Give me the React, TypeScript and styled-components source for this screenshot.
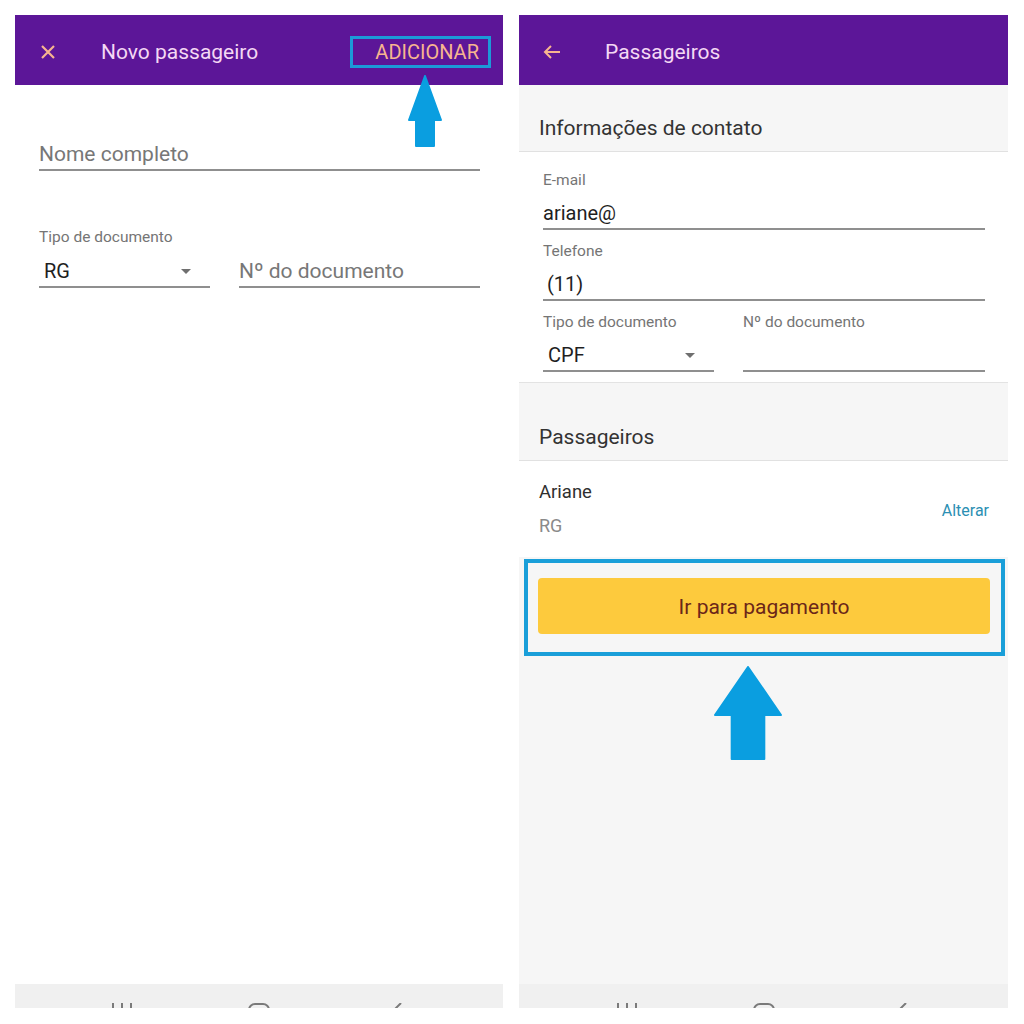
import styled, { createGlobalStyle } from "styled-components";

const GlobalStyle = createGlobalStyle`
  body {
    margin: 0;
    background: #ffffff;
    font-family: Roboto, "Noto Sans", Arial, sans-serif;
  }
`;

const Page = styled.div`
  display: flex;
  gap: 16px;
  padding: 15px 0 0 15px;
  height: 1024px;
  box-sizing: border-box;
`;

const Phone = styled.div<{ $bg: string; $w: number }>`
  position: relative;
  width: ${(p) => p.$w}px;
  height: 993px;
  display: flex;
  flex-direction: column;
  background: ${(p) => p.$bg};
`;

const AppBar = styled.div`
  height: 70px;
  flex-shrink: 0;
  box-sizing: border-box;
  background: #5c1698;
  display: flex;
  align-items: center;
  padding: 4px 12px 0 24px;
`;

const BarIcon = styled.div`
  width: 18px;
  height: 18px;
  display: flex;
  align-items: center;
  justify-content: center;
  margin-right: 44px;
`;

const BarTitle = styled.div`
  flex: 1;
  font-size: 21px;
  color: #f4d8f4;
`;

const ActionBox = styled.div`
  border: 3px solid #1c9ad8;
  padding: 0 9px 0 22px;
  height: 32px;
  box-sizing: border-box;
  display: flex;
  align-items: center;
  font-size: 20px;
  color: #f7b58f;
`;

const Body = styled.div<{ $pad?: string }>`
  flex: 1;
  display: flex;
  flex-direction: column;
  padding: ${(p) => p.$pad || "0"};
`;

const Label = styled.div`
  font-size: 15.5px;
  line-height: 18px;
  color: #757575;
`;

const Input = styled.div<{ $empty?: boolean; $size?: number; $indent?: number }>`
  font-size: ${(p) => p.$size || 21}px;
  line-height: 24px;
  height: 24px;
  color: ${(p) => (p.$empty ? "#777777" : "#1f1f1f")};
  padding: 0 0 3px ${(p) => p.$indent || 0}px;
  border-bottom: 2px solid #8f8f8f;
  display: flex;
  align-items: center;
  justify-content: space-between;
`;

const Caret = styled.span`
  width: 0;
  height: 0;
  border-left: 5px solid transparent;
  border-right: 5px solid transparent;
  border-top: 5px solid #6f6f6f;
  margin-right: 19px;
`;

const DocRow = styled.div<{ $first: number; $gap: number }>`
  display: grid;
  grid-template-columns: ${(p) => p.$first}px 1fr;
  column-gap: ${(p) => p.$gap}px;
  align-items: end;
`;

const SectionHead = styled.div<{ $top: number }>`
  padding: ${(p) => p.$top}px 20px 11px;
  font-size: 21px;
  line-height: 24px;
  color: #333333;
  border-bottom: 1px solid #e1e1e1;
`;

const Card = styled.div`
  background: #ffffff;
  padding: 19px 23px 10px 24px;
  display: flex;
  flex-direction: column;
  gap: 12px;
  border-bottom: 1px solid #e3e3e3;
`;

const Field = styled.div`
  display: flex;
  flex-direction: column;
  gap: 12px;
`;

const PassengerRow = styled.div`
  background: #ffffff;
  height: 96px;
  box-sizing: border-box;
  padding: 0 19px 0 20px;
  display: flex;
  align-items: center;
  justify-content: space-between;
`;

const PassengerInfo = styled.div`
  display: flex;
  flex-direction: column;
  gap: 14px;
`;

const PassengerName = styled.div`
  font-size: 18.5px;
  line-height: 20px;
  color: #2f2f2f;
`;

const PassengerDoc = styled.div`
  font-size: 18px;
  line-height: 20px;
  color: #8a8a8a;
`;

const LinkButton = styled.div`
  font-size: 16px;
  color: #2b8fb3;
  padding-top: 2px;
`;

const Highlight = styled.div`
  margin: 2px 3px 0 5px;
  border: 4px solid #1a9fd9;
  padding: 15px 11px 18px 10px;
`;

const PayButton = styled.div`
  height: 56px;
  border-radius: 4px;
  background: #fdca3d;
  display: flex;
  align-items: center;
  justify-content: center;
  font-size: 21px;
  color: #6b2619;
  padding-top: 2px;
  box-sizing: border-box;
`;

const ArrowRow = styled.div`
  padding: 10px 0 0 195px;
`;

const OverArrow = styled.svg`
  position: absolute;
  left: 393px;
  top: 60px;
`;

const NavBar = styled.div`
  height: 24px;
  flex-shrink: 0;
  background: #f0f0f0;
  overflow: hidden;
  display: flex;
  justify-content: center;
  gap: 107px;
  padding-top: 19px;
  box-sizing: border-box;
`;

const NavIcon = styled.svg`
  width: 30px;
  height: 16px;
  flex-shrink: 0;
`;

function BlueArrow({ w, h, head }: { w: number; h: number; head: number }) {
  const s = w * 0.26;
  return (
    <svg width={w} height={h} viewBox={`0 0 ${w} ${h}`}>
      <path
        d={`M${w / 2} 1 L1 ${head} L${s} ${head} L${s} ${h - 1} L${w - s} ${h - 1} L${w - s} ${head} L${w - 1} ${head} Z`}
        fill="#0a9ee0"
        stroke="#0a9ee0"
        strokeWidth={2}
        strokeLinejoin="round"
      />
    </svg>
  );
}

function Nav() {
  return (
    <NavBar>
      <NavIcon viewBox="0 0 30 16">
        <rect x="5" y="0" width="2" height="14" fill="#7a7a7a" />
        <rect x="14" y="0" width="2" height="14" fill="#7a7a7a" />
        <rect x="23" y="0" width="2" height="14" fill="#7a7a7a" />
      </NavIcon>
      <NavIcon viewBox="0 0 30 16">
        <rect x="5" y="1" width="20" height="16" rx="6" fill="none" stroke="#7a7a7a" strokeWidth="2" />
      </NavIcon>
      <NavIcon viewBox="0 0 30 16">
        <path d="M20 0 L12 8 L20 16" fill="none" stroke="#7a7a7a" strokeWidth="2" />
      </NavIcon>
    </NavBar>
  );
}

export default function App() {
  return (
    <>
      <GlobalStyle />
      <Page>
        <Phone $bg="#ffffff" $w={488}>
          <AppBar>
            <BarIcon>
              <svg width="14" height="14" viewBox="0 0 14 14">
                <path d="M1 1 L13 13 M13 1 L1 13" stroke="#f7b58f" strokeWidth="2.2" />
              </svg>
            </BarIcon>
            <BarTitle>Novo passageiro</BarTitle>
            <ActionBox>ADICIONAR</ActionBox>
          </AppBar>
          <Body $pad="57px 23px 0 24px">
            <Input $empty>Nome completo</Input>
            <DocRow $first={171} $gap={29} style={{ marginTop: 57 }}>
              <Field style={{ gap: 13 }}>
                <Label>Tipo de documento</Label>
                <Input $size={20} $indent={5}>
                  RG
                  <Caret />
                </Input>
              </Field>
              <Input $empty>Nº do documento</Input>
            </DocRow>
          </Body>
          <OverArrow width="34" height="72" viewBox="0 0 34 72">
            <path
              d="M17 1 L1 45 L8 45 L8 71 L26 71 L26 45 L33 45 Z"
              fill="#0a9ee0"
              stroke="#0a9ee0"
              strokeWidth="2"
              strokeLinejoin="round"
            />
          </OverArrow>
          <Nav />
        </Phone>

        <Phone $bg="#f6f6f6" $w={489}>
          <AppBar>
            <BarIcon>
              <svg width="18" height="14" viewBox="0 0 18 14">
                <path d="M17 7 H2 M8 1 L2 7 L8 13" stroke="#f7b58f" strokeWidth="2" fill="none" />
              </svg>
            </BarIcon>
            <BarTitle>Passageiros</BarTitle>
          </AppBar>
          <Body>
            <SectionHead $top={31}>Informações de contato</SectionHead>
            <Card>
              <Field>
                <Label>E-mail</Label>
                <Input $size={20}>ariane@</Input>
              </Field>
              <Field>
                <Label>Telefone</Label>
                <Input $size={20} $indent={4}>(11)</Input>
              </Field>
              <DocRow $first={171} $gap={29}>
                <Field>
                  <Label>Tipo de documento</Label>
                  <Input $size={20} $indent={5}>
                    CPF
                    <Caret />
                  </Input>
                </Field>
                <Field>
                  <Label>Nº do documento</Label>
                  <Input />
                </Field>
              </DocRow>
            </Card>
            <SectionHead $top={42}>Passageiros</SectionHead>
            <PassengerRow>
              <PassengerInfo>
                <PassengerName>Ariane</PassengerName>
                <PassengerDoc>RG</PassengerDoc>
              </PassengerInfo>
              <LinkButton>Alterar</LinkButton>
            </PassengerRow>
            <Highlight>
              <PayButton>Ir para pagamento</PayButton>
            </Highlight>
            <ArrowRow>
              <BlueArrow w={68} h={94} head={49} />
            </ArrowRow>
          </Body>
          <Nav />
        </Phone>
      </Page>
    </>
  );
}
